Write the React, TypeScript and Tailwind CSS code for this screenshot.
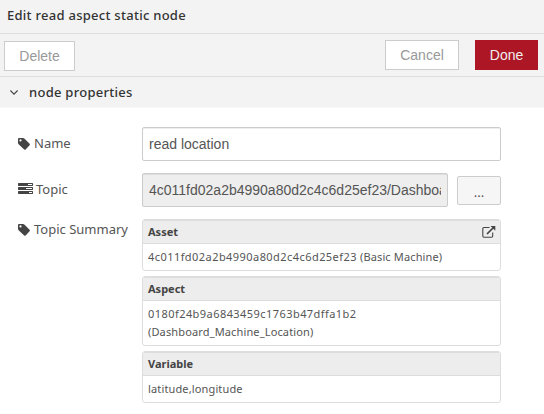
import type { ReactNode } from "react";

const TagIcon = () => (
  <svg className="h-[12px] w-[12px] shrink-0" viewBox="0 0 12 12" fill="#444">
    <path
      fillRule="evenodd"
      d="M0 1Q0 0 1 0H5Q5.7 0 6.3.6L11.6 5.8Q12.2 6.5 11.6 7.2L7.6 11.5Q6.9 12.1 6.2 11.5L.6 6.3Q0 5.6 0 5ZM2.5 1.3A1.1 1.1 0 1 0 2.5 3.5A1.1 1.1 0 1 0 2.5 1.3Z"
    />
  </svg>
);

const TasksIcon = () => (
  <svg className="h-[11px] w-[15px] shrink-0" viewBox="0 0 15 11" fill="#444">
    <path
      fillRule="evenodd"
      d="M.5 0H14.5L15 .5V2.5L14.5 3H.5L0 2.5V.5ZM10 1V2H14V1ZM.5 4H14.5L15 4.5V6.5L14.5 7H.5L0 6.5V4.5ZM8 5V6H14V5ZM.5 8H14.5L15 8.5V10.5L14.5 11H.5L0 10.5V8.5ZM11 9V10H14V9Z"
    />
  </svg>
);

const OpenIcon = () => (
  <svg className="h-[12px] w-[14px] shrink-0" viewBox="0 0 14 12" fill="none" stroke="#444">
    <path d="M7.5 1.5H2Q.8 1.5 .8 2.7V10Q.8 11.2 2 11.2H9.5Q10.7 11.2 10.7 10V6.5" strokeWidth="1.1" />
    <path d="M5 8L11 2" strokeWidth="1.7" />
    <path d="M8.5 0H13.3V4.8Z" fill="#444" stroke="none" />
  </svg>
);

const Label = ({ icon, children }: { icon: ReactNode; children: ReactNode }) => (
  <div className="flex h-5 w-[124px] shrink-0 items-center text-[13px] whitespace-nowrap text-[#555]">
    {icon}
    {children}
  </div>
);

const Hash = ({ children }: { children: ReactNode }) => <span className="tracking-[0.44px]">{children}</span>;

const Card = ({ title, action, children }: { title: string; action?: ReactNode; children: ReactNode }) => (
  <div className="overflow-hidden rounded-[3px] border border-[#ddd] text-[11px] leading-[18px]">
    <div className="flex h-6 items-center justify-between border-t border-b border-[#ddd] bg-[#ededed] pr-1 pl-[5px] font-bold text-[#444]">
      {title}
      {action}
    </div>
    <div className="px-[5px] pt-1 pb-1 tracking-[0.14px] text-[#555]">{children}</div>
  </div>
);

export default function App() {
  return (
    <div className="h-[414px] w-[544px] overflow-hidden bg-white font-['Noto_Sans',sans-serif]">
      <header className="flex h-[34px] items-center border-b border-[#ddd] bg-[#f3f3f3] pb-px pl-[7px] text-[13px] font-medium tracking-[0.27px] text-[#333]">
        Edit read aspect static node
      </header>
      <div className="flex h-[43px] items-start border-b border-[#ddd] bg-[#f3f3f3] pt-[6px] pr-[6px] pl-1 font-['Liberation_Sans',Arial,sans-serif] text-[14px] text-[#999]">
        <button className="mt-px h-[30px] w-[71px] border border-[#ccc] bg-white">Delete</button>
        <button className="ml-auto h-[30px] w-[74px] border border-[#ccc] bg-white">Cancel</button>
        <button className="ml-4 h-[30px] w-[63px] bg-[#ad1625] text-[#eee]">Done</button>
      </div>
      <div className="flex h-[31px] items-center border-b border-[#f8f8f8] bg-[#f3f3f3] pl-[10px] text-[13px] font-medium tracking-[0.27px] text-[#333]">
        <svg className="mr-[11px] h-[5px] w-[8px]" viewBox="0 0 8 5" fill="none" stroke="#444">
          <path d="M.4 .5L4 4.1L7.6 .5" strokeWidth="1.1" />
        </svg>
        <span className="pt-px">node properties</span>
      </div>
      <main className="flex flex-col gap-3 pt-[19px] pl-[18px] text-[#555]">
        <div className="flex h-[34px] items-center">
          <Label icon={<span className="mr-1 pb-px"><TagIcon /></span>}>Name</Label>
          <input
            readOnly
            value="read location"
            className="h-[34px] w-[359px] rounded-[2px] border border-[#ccc] px-[6px] font-['Liberation_Sans',Arial,sans-serif] text-[14px] shadow-[inset_0_1px_1px_rgba(0,0,0,0.075)] outline-none"
          />
        </div>
        <div className="flex h-[34px] items-center">
          <Label icon={<span className="mr-[3px] pb-[3px]"><TasksIcon /></span>}>Topic</Label>
          <input
            readOnly
            value="4c011fd02a2b4990a80d2c4c6d25ef23/Dashboard_Machine_Location"
            className="h-[34px] w-[306px] rounded-[2px] border border-[#ccc] bg-[#eee] px-[6px] font-['Liberation_Sans',Arial,sans-serif] text-[14px] shadow-[inset_0_1px_1px_rgba(0,0,0,0.075)] outline-none"
          />
          <button className="mt-px ml-[9px] h-[29px] w-[44px] rounded-[2px] border border-[#ccc] bg-[#f6f6f6] pt-[2px] text-[13px] leading-5 text-[#555]">
            ...
          </button>
        </div>
        <div className="flex items-start">
          <div className="pt-px">
            <Label icon={<span className="mr-1 pb-px"><TagIcon /></span>}>Topic Summary</Label>
          </div>
          <div className="flex w-[359px] flex-col gap-[5px]">
            <Card title="Asset" action={<OpenIcon />}>
              <Hash>4c011fd02a2b4990a80d2c4c6d25ef23</Hash> (Basic Machine)
            </Card>
            <Card title="Aspect">
              <Hash>0180f24b9a6843459c1763b47dffa1b2</Hash>
              <br />
              (Dashboard_Machine_Location)
            </Card>
            <Card title="Variable">latitude,longitude</Card>
          </div>
        </div>
      </main>
    </div>
  );
}
